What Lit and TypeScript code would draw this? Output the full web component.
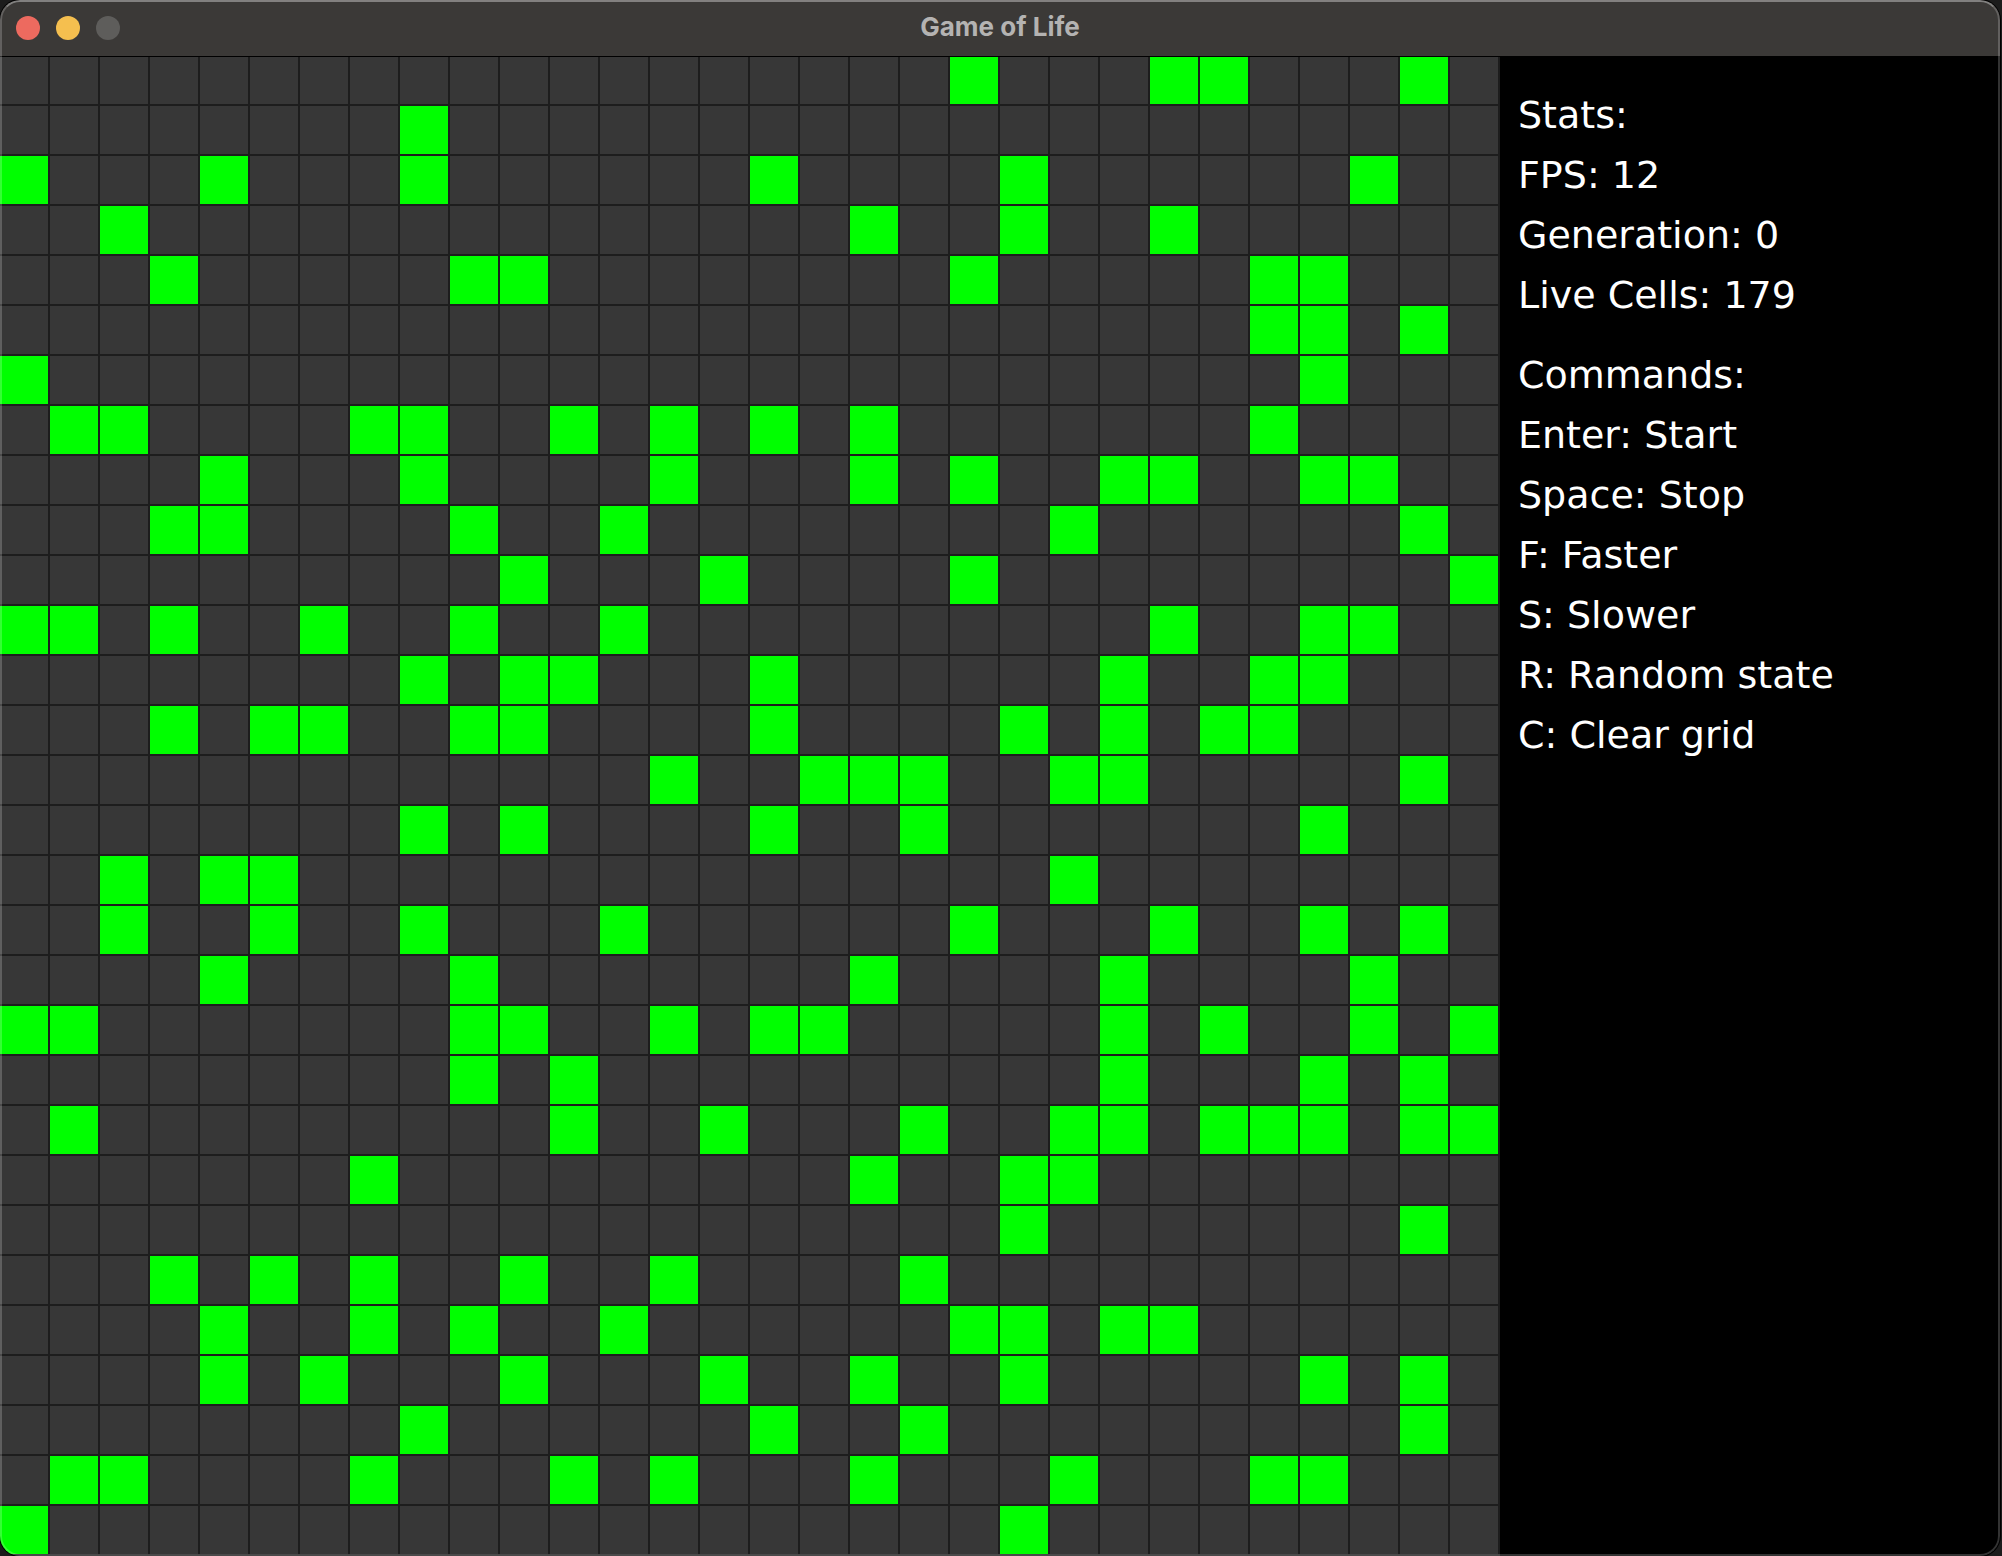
import { LitElement, html, css } from "lit";
import { customElement, property } from "lit/decorators.js";
import { classMap } from "lit/directives/class-map.js";

const SIZE = 30;

/** Columns of the live cells, one entry per row. */
const LIVE: number[][] = [
  [19, 23, 24, 28],
  [8],
  [0, 4, 8, 15, 20, 27],
  [2, 17, 20, 23],
  [3, 9, 10, 19, 25, 26],
  [25, 26, 28],
  [0, 26],
  [1, 2, 7, 8, 11, 13, 15, 17, 25],
  [4, 8, 13, 17, 19, 22, 23, 26, 27],
  [3, 4, 9, 12, 21, 28],
  [10, 14, 19, 29],
  [0, 1, 3, 6, 9, 12, 23, 26, 27],
  [8, 10, 11, 15, 22, 25, 26],
  [3, 5, 6, 9, 10, 15, 20, 22, 24, 25],
  [13, 16, 17, 18, 21, 22, 28],
  [8, 10, 15, 18, 26],
  [2, 4, 5, 21],
  [2, 5, 8, 12, 19, 23, 26, 28],
  [4, 9, 17, 22, 27],
  [0, 1, 9, 10, 13, 15, 16, 22, 24, 27, 29],
  [9, 11, 22, 26, 28],
  [1, 11, 14, 18, 21, 22, 24, 25, 26, 28, 29],
  [7, 17, 20, 21],
  [20, 28],
  [3, 5, 7, 10, 13, 18],
  [4, 7, 9, 12, 19, 20, 22, 23],
  [4, 6, 10, 14, 17, 20, 26, 28],
  [8, 15, 18, 28],
  [1, 2, 7, 11, 13, 17, 21, 25, 26],
  [0, 20],
];

@customElement("title-bar")
export class TitleBar extends LitElement {
  @property() heading = "";

  static styles = css`
    :host {
      display: grid;
      grid-template-columns: 1fr auto 1fr;
      align-items: center;
      height: 56px;
      padding: 0 16px;
      box-sizing: border-box;
      background: #3b3937;
    }
    .lights {
      display: flex;
      gap: 16px;
    }
    .light {
      width: 24px;
      height: 24px;
      padding: 0;
      border: 0;
      border-radius: 50%;
    }
    .close {
      background: #ed6a5f;
    }
    .minimize {
      background: #f5bf4f;
    }
    .zoom {
      background: #5e5d5b;
    }
    .title {
      align-self: start;
      margin: 0;
      font: 700 26px/54px Inter, "Liberation Sans", sans-serif;
      color: #b4b3b2;
    }
  `;

  render() {
    return html`
      <div class="lights">
        <button class="light close" aria-label="Close"></button>
        <button class="light minimize" aria-label="Minimize"></button>
        <button class="light zoom" aria-label="Zoom" disabled></button>
      </div>
      <h1 class="title">${this.heading}</h1>
    `;
  }
}

@customElement("life-board")
export class LifeBoard extends LitElement {
  @property({ attribute: false }) live: number[][] = [];

  static styles = css`
    :host {
      display: grid;
      grid-template-columns: repeat(30, minmax(0, 1fr));
      grid-template-rows: repeat(30, minmax(0, 1fr));
      gap: 2px;
      padding: 0 2px 2px 0;
      box-sizing: border-box;
      background: #1d1d1d;
    }
    .cell {
      background: #373737;
    }
    .alive {
      background: #00ff00;
    }
  `;

  render() {
    return Array.from({ length: SIZE * SIZE }, (_, i) => {
      const alive = this.live[Math.floor(i / SIZE)]?.includes(i % SIZE) ?? false;
      return html`<div class=${classMap({ cell: true, alive })}></div>`;
    });
  }
}

@customElement("info-panel")
export class InfoPanel extends LitElement {
  @property({ type: Number }) fps = 0;
  @property({ type: Number }) generation = 0;
  @property({ type: Number }) population = 0;

  static styles = css`
    :host {
      display: flex;
      flex-direction: column;
      gap: 20px;
      padding: 29px 18px;
      box-sizing: border-box;
      background: #000;
      color: #fff;
      font: 38px/60px "DejaVu Sans", sans-serif;
      white-space: nowrap;
    }
    .heading,
    .line {
      margin: 0;
      font: inherit;
    }
  `;

  render() {
    return html`
      <section>
        <h2 class="heading">Stats:</h2>
        <p class="line">FPS: ${this.fps}</p>
        <p class="line">Generation: ${this.generation}</p>
        <p class="line">Live Cells: ${this.population}</p>
      </section>
      <section>
        <h2 class="heading">Commands:</h2>
        <p class="line">Enter: Start</p>
        <p class="line">Space: Stop</p>
        <p class="line">F: Faster</p>
        <p class="line">S: Slower</p>
        <p class="line">R: Random state</p>
        <p class="line">C: Clear grid</p>
      </section>
    `;
  }
}

@customElement("app-root")
export class AppRoot extends LitElement {
  static styles = css`
    :host {
      display: block;
      height: 100vh;
      padding-right: 2px;
      box-sizing: border-box;
      background: #1c1c1c;
      overflow: hidden;
    }
    .frame {
      height: 100%;
      border-radius: 20px;
      box-shadow: 0 0 0 1px #000;
    }
    .window {
      position: relative;
      display: flex;
      flex-direction: column;
      height: 100%;
      border-radius: 20px;
      overflow: hidden;
      background: #000;
    }
    /* Translucent rim drawn over the window's edge. */
    .window::after {
      content: "";
      position: absolute;
      inset: 0;
      border: 2px solid rgba(255, 255, 255, 0.2);
      border-top-color: rgba(255, 255, 255, 0.36);
      border-radius: 20px;
      pointer-events: none;
    }
    .content {
      display: flex;
      flex: 1;
      min-height: 0;
    }
    /* Hairline over the first row of pixels below the title bar. */
    .content::before {
      content: "";
      position: absolute;
      left: 0;
      right: 0;
      height: 1px;
      background: #000;
    }
    .board {
      height: 100%;
      aspect-ratio: 1;
      flex: none;
    }
    .panel {
      flex: 1;
      min-width: 0;
    }
  `;

  render() {
    const population = LIVE.reduce((sum, row) => sum + row.length, 0);
    return html`
      <div class="frame">
        <div class="window">
          <title-bar heading="Game of Life"></title-bar>
          <main class="content">
            <life-board class="board" .live=${LIVE}></life-board>
            <info-panel
              class="panel"
              .fps=${12}
              .generation=${0}
              .population=${population}
            ></info-panel>
          </main>
        </div>
      </div>
    `;
  }
}
